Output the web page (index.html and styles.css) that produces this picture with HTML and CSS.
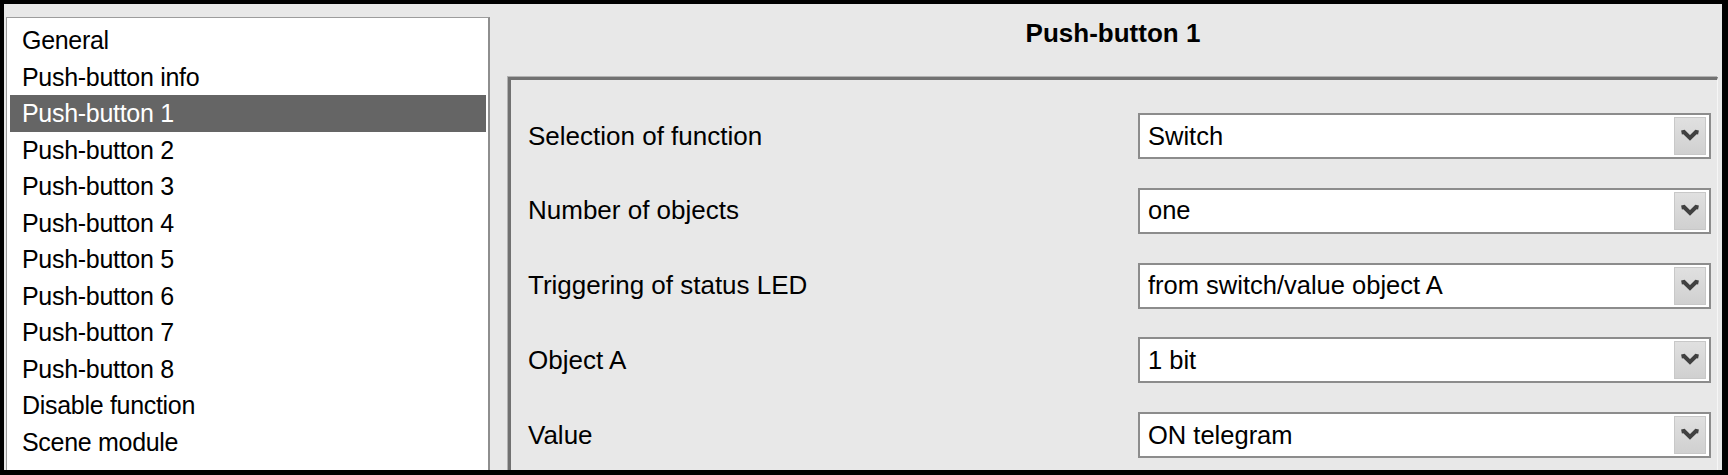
FILE: index.html
```html
<!DOCTYPE html>
<html>
<head>
<meta charset="utf-8">
<link rel="stylesheet" href="styles.css">
</head>
<body>
<div class="window">
  <div class="nav">
    <div class="item">General</div>
    <div class="item">Push-button info</div>
    <div class="item sel">Push-button 1</div>
    <div class="item">Push-button 2</div>
    <div class="item">Push-button 3</div>
    <div class="item">Push-button 4</div>
    <div class="item">Push-button 5</div>
    <div class="item">Push-button 6</div>
    <div class="item">Push-button 7</div>
    <div class="item">Push-button 8</div>
    <div class="item">Disable function</div>
    <div class="item">Scene module</div>
  </div>
  <div class="panel">
    <div class="title">Push-button 1</div>
    <div class="frame">
      <div class="row">
        <span class="label">Selection of function</span>
        <div class="select"><span class="value">Switch</span><span class="btn"><svg width="20" height="14" viewBox="0 0 20 14"><path d="M1.5 3.5 L4 3 L10 9 L16 3 L18.5 3.5" fill="none" stroke="#404040" stroke-width="4" stroke-linejoin="miter"/></svg></span></div>
      </div>
      <div class="row">
        <span class="label">Number of objects</span>
        <div class="select"><span class="value">one</span><span class="btn"><svg width="20" height="14" viewBox="0 0 20 14"><path d="M1.5 3.5 L4 3 L10 9 L16 3 L18.5 3.5" fill="none" stroke="#404040" stroke-width="4" stroke-linejoin="miter"/></svg></span></div>
      </div>
      <div class="row">
        <span class="label">Triggering of status LED</span>
        <div class="select"><span class="value">from switch/value object A</span><span class="btn"><svg width="20" height="14" viewBox="0 0 20 14"><path d="M1.5 3.5 L4 3 L10 9 L16 3 L18.5 3.5" fill="none" stroke="#404040" stroke-width="4" stroke-linejoin="miter"/></svg></span></div>
      </div>
      <div class="row">
        <span class="label">Object A</span>
        <div class="select"><span class="value">1 bit</span><span class="btn"><svg width="20" height="14" viewBox="0 0 20 14"><path d="M1.5 3.5 L4 3 L10 9 L16 3 L18.5 3.5" fill="none" stroke="#404040" stroke-width="4" stroke-linejoin="miter"/></svg></span></div>
      </div>
      <div class="row">
        <span class="label">Value</span>
        <div class="select"><span class="value">ON telegram</span><span class="btn"><svg width="20" height="14" viewBox="0 0 20 14"><path d="M1.5 3.5 L4 3 L10 9 L16 3 L18.5 3.5" fill="none" stroke="#404040" stroke-width="4" stroke-linejoin="miter"/></svg></span></div>
      </div>
    </div>
  </div>
</div>
</body>
</html>
```
FILE: styles.css
```css
html, body {
  margin: 0;
  padding: 0;
  height: 100%;
}
body {
  background: #000;
  font-family: "Liberation Sans", Arial, sans-serif;
  color: #000;
  overflow: hidden;
}
.window {
  margin: 4px 6px 0 4px;
  height: 466px;
  background: #e8e8e8;
  display: flex;
  overflow: hidden;
}
.nav {
  width: 484px;
  flex: none;
  margin: 13px 0 0 2px;
  background: #fff;
  border: 1px solid #9c9c9c;
  border-right: 2px solid #8e8e8e;
  border-bottom: none;
  box-sizing: border-box;
  padding: 4px 2px 0 3px;
}
.item {
  height: 36.5px;
  line-height: 36.5px;
  padding-left: 12px;
  font-size: 25px;
  letter-spacing: -0.3px;
  white-space: nowrap;
}
.item.sel {
  background: #656565;
  color: #fff;
}
.panel {
  flex: 1;
  display: flex;
  flex-direction: column;
  margin: 0 4px 0 18px;
}
.title {
  margin-top: 14px;
  line-height: 30px;
  text-align: center;
  font-weight: bold;
  font-size: 26px;
}
.frame {
  margin-top: 29px;
  flex: 1;
  border-top: 3px solid #717171;
  border-left: 3px solid #717171;
  border-right: 1px solid #f6f6f6;
  box-shadow: -1px -1px 0 #b2b2b2;
  padding: 33px 6px 0 17px;
}
.row {
  display: flex;
  align-items: center;
  height: 46px;
  margin-bottom: 28.8px;
}
.label {
  flex: 1;
  font-size: 26px;
  white-space: nowrap;
}
.select {
  width: 573px;
  height: 46px;
  box-sizing: border-box;
  border: 2px solid #8c8c8c;
  background: #fff;
  display: flex;
  align-items: center;
  padding-left: 8px;
}
.value {
  font-size: 25.5px;
  white-space: nowrap;
}
.btn {
  margin-left: auto;
  margin-right: 3px;
  width: 32px;
  height: 38px;
  box-sizing: border-box;
  background: linear-gradient(#e0e0e0, #d0d0d0);
  border: 1px solid #c8c8c8;
  display: flex;
  align-items: center;
  justify-content: center;
}
.btn svg {
  display: block;
}
```
